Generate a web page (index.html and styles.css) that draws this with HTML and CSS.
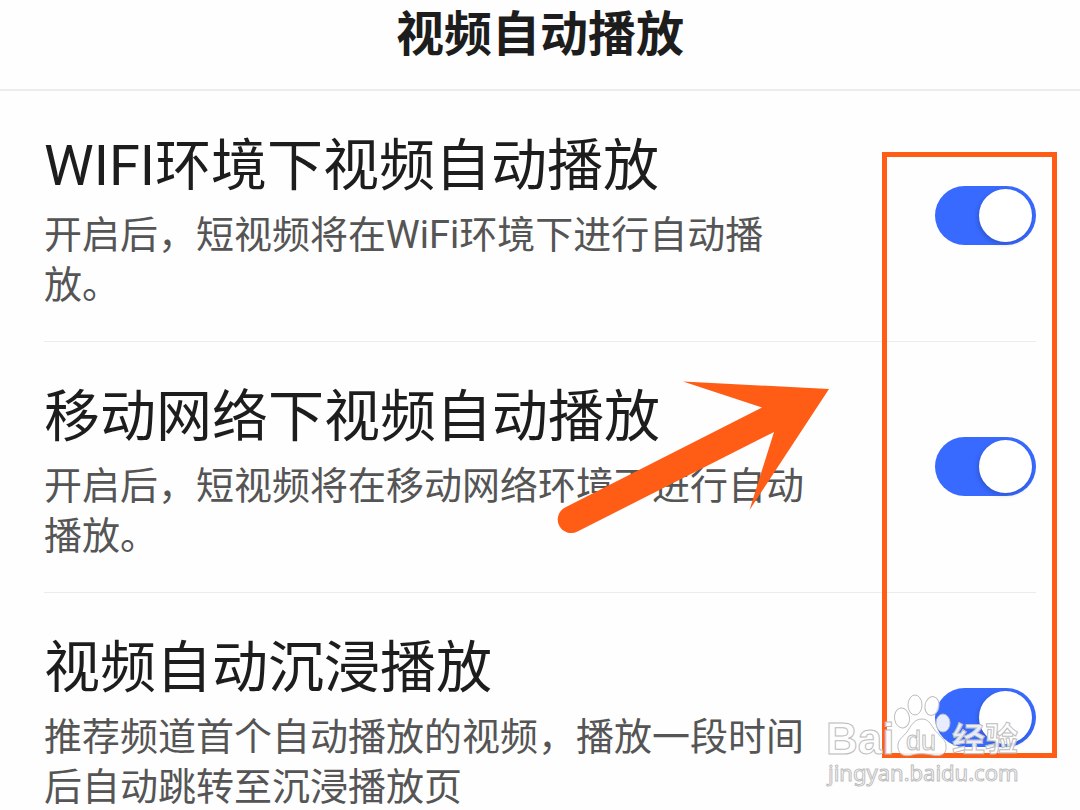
FILE: index.html
```html
<!DOCTYPE html>
<html lang="zh-CN">
<head>
<meta charset="utf-8">
<meta name="viewport" content="width=device-width, initial-scale=1">
<title>视频自动播放</title>
<link rel="stylesheet" href="styles.css">
</head>
<body>
<header class="header"><h1 class="header-title">视频自动播放</h1></header>
<main class="settings">
  <section class="row">
    <div class="copy">
      <label class="title" for="wifi">WIFI环境下视频自动播放</label>
      <p class="desc" id="wifi-desc">开启后，短视频将在WiFi环境下进行自动播放。</p>
    </div>
    <input class="switch" type="checkbox" role="switch" id="wifi" aria-describedby="wifi-desc" checked>
  </section>
  <section class="row">
    <div class="copy">
      <label class="title" for="mobile">移动网络下视频自动播放</label>
      <p class="desc" id="mobile-desc">开启后，短视频将在移动网络环境下进行自动播放。</p>
    </div>
    <input class="switch" type="checkbox" role="switch" id="mobile" aria-describedby="mobile-desc" checked>
  </section>
  <section class="row">
    <div class="copy">
      <label class="title" for="immersive">视频自动沉浸播放</label>
      <p class="desc" id="immersive-desc">推荐频道首个自动播放的视频，播放一段时间后自动跳转至沉浸播放页</p>
    </div>
    <input class="switch" type="checkbox" role="switch" id="immersive" aria-describedby="immersive-desc" checked>
  </section>
</main>
<div class="frame" aria-hidden="true"></div>
<svg class="arrow" viewBox="0 0 290 180" width="290" height="180" aria-hidden="true">
  <path d="M133 21.500 L279 29 L199.500 150 L224 72 L27.500 171.500 A13.500 13.500 0 0 1 15 147.500 L212 47.500 Z" fill="#ff5c16"/>
</svg>
<svg class="watermark" viewBox="0 0 210 100" width="210" height="100" aria-label="Baidu 经验">
  <g fill="#fff" fill-opacity=".88" stroke="#bdbdbd" stroke-width="1">
    <text class="mark-latin" x="6" y="64">Bai</text>
    <ellipse cx="82" cy="28" rx="7.500" ry="10" transform="rotate(-8 82 28)"/>
    <ellipse cx="95" cy="15" rx="7" ry="10"/>
    <ellipse cx="112" cy="16" rx="7" ry="9.500" transform="rotate(10 112 16)"/>
    <ellipse cx="123" cy="33" rx="7" ry="9"/>
    <path d="M102 29 C94 29 91 36 87 42 C82 48 77 50 78 58 C79 65 85 67 92 65 C99 63 106 64 112 65 C121 67 127 64 126 56 C126 49 119 46 114 39 C110 33 108 29 102 29 Z"/>
    <text class="mark-du" x="86" y="60">du</text>
    <text class="mark-cjk" x="132" y="61">经验</text>
    <text class="mark-url" x="8" y="91">jingyan.baidu.com</text>
  </g>
</svg>
</body>
</html>
```
FILE: styles.css
```css
* { box-sizing: border-box; }

body {
  position: relative;
  height: 100vh;
  margin: 0;
  overflow: hidden;
  background: #fefefe;
  color: #1d1d1d;
  font-family: Roboto, "Noto Sans CJK SC", sans-serif;
}

.header {
  padding-bottom: 20px;
  border-bottom: 2px solid #ececec;
  text-align: center;
}

.header-title {
  margin: 0;
  font-size: 48px;
  font-weight: 700;
  line-height: 69px;
}

.settings { padding: 0 44px; }

.row {
  display: flex;
  align-items: center;
  gap: 120px;
  padding: 37px 0 31px;
  border-bottom: 1px solid #ececec;
}

.copy {
  display: flex;
  flex: 1;
  flex-direction: column;
  gap: 6px;
}

.title {
  font-size: 56px;
  line-height: 76px;
}

.desc {
  margin: 0;
  color: #555;
  font-size: 38px;
  line-height: 50px;
}

/* The negative margin centres the switch on the whole row. */
.switch {
  position: relative;
  flex: none;
  width: 101px;
  height: 59px;
  margin: -8px 0 0;
  border-radius: 30px;
  background: #396aff;
  appearance: none;
}

.switch::after {
  content: "";
  position: absolute;
  top: 3px;
  left: 4px;
  width: 53px;
  height: 53px;
  border-radius: 50%;
  background: #fff;
  box-shadow: -1px 2px 5px #0003;
}

.switch:checked::after {
  right: 4px;
  left: auto;
}

.frame {
  position: absolute;
  top: 152px;
  right: 23px;
  width: 175px;
  height: 606px;
  border: 5px solid #ff5c16;
  pointer-events: none;
}

.arrow {
  position: absolute;
  top: 360px;
  left: 550px;
  pointer-events: none;
}

.watermark {
  position: absolute;
  top: 690px;
  right: 50px;
  pointer-events: none;
}

.mark-latin {
  font: 700 44px "Liberation Sans", sans-serif;
}

.mark-du {
  font: 400 27px "Liberation Sans", sans-serif;
}

.mark-cjk {
  font: 700 33px "Noto Sans CJK SC", sans-serif;
}

.mark-url {
  font: 400 22px "Noto Sans", sans-serif;
}
```
